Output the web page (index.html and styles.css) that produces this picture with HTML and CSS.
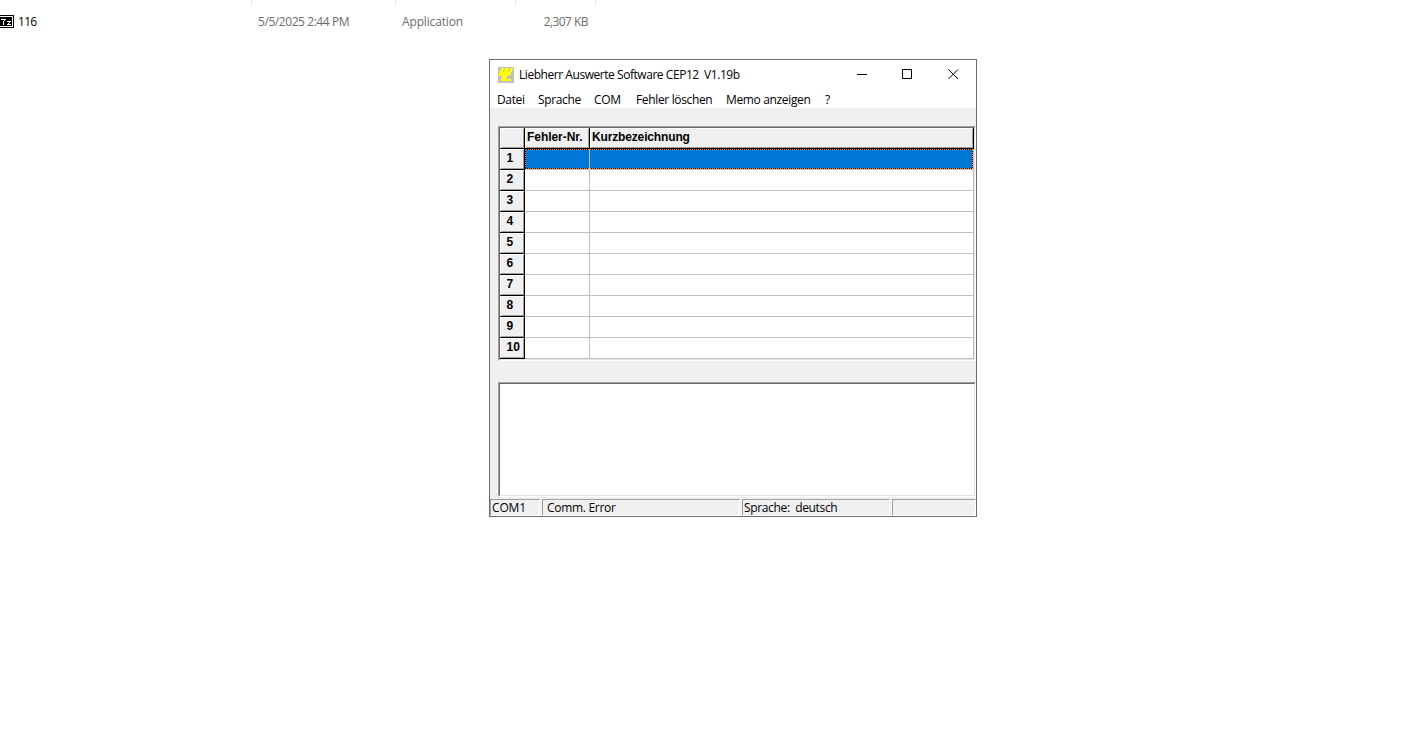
FILE: index.html
```
<!DOCTYPE html>
<html lang="de">
<head>
  <meta charset="UTF-8" />
  <title>Liebherr Auswerte Software CEP12</title>
  <link rel="stylesheet" href="styles.css">
</head>
<body>
  <div class="explorer">
    <div class="columns"><span></span><span></span><span></span><span></span></div>
    <div class="file">
      <div class="name">
        <svg class="icon" width="14" height="13" viewBox="0 0 14 13" shape-rendering="crispEdges">
          <path d="M0 0h14v13H0z" fill="#000"/>
          <path d="M0 1h13v11H0v-1h12V2H0z" fill="#fff"/>
          <path d="M1 4h5v1H5v1H4v4H3V6h1V5H1zM7 6h4v1h-1v1H9v1h2v1H7V9h1V8h1V7H7z" fill="#fff"/>
        </svg>
        <span>116</span>
      </div>
      <span class="date">5/5/2025 2:44 PM</span>
      <span class="type">Application</span>
      <span class="size">2,307 KB</span>
    </div>
  </div>

  <div class="window">
    <div class="titlebar">
      <svg class="logo" width="16" height="16" viewBox="0 0 16 16" shape-rendering="crispEdges">
        <path d="M0 0h16v16H0z" fill="#c0c0c0"/>
        <path d="M3 1h3v2H5v2h1V3h1V1h4v2h-1v2h1V3h1V1h3v2h-1v2h-1v3h-2v1H9v2H8v1h5v2H3v-3h1V9H1V6h1V3h1z" fill="#ff0"/>
      </svg>
      <span class="title">Liebherr Auswerte Software CEP12&nbsp; V1.19b</span>
      <svg class="controls" width="102" height="11" viewBox="0 0 102 11">
        <path d="M0 5.5h10M45.5.5h9v9h-9zM91.5.5l9.5 9.5M101 .5L91.5 10" fill="none" stroke="#000"/>
      </svg>
    </div>
    <div class="menu">
      <span class="m-datei">Datei</span>
      <span class="m-sprache">Sprache</span>
      <span class="m-com">COM</span>
      <span class="m-fehler">Fehler löschen</span>
      <span class="m-memo">Memo anzeigen</span>
      <span>?</span>
    </div>
    <div class="client">
      <div class="grid">
        <table>
          <tr><th class="num"></th><th class="nr"><span>Fehler-Nr.</span></th><th class="kurz"><span>Kurzbezeichnung</span></th></tr>
          <tr class="selected"><th>1</th><td></td><td></td></tr>
          <tr><th>2</th><td></td><td></td></tr>
          <tr><th>3</th><td></td><td></td></tr>
          <tr><th>4</th><td></td><td></td></tr>
          <tr><th>5</th><td></td><td></td></tr>
          <tr><th>6</th><td></td><td></td></tr>
          <tr><th>7</th><td></td><td></td></tr>
          <tr><th>8</th><td></td><td></td></tr>
          <tr><th>9</th><td></td><td></td></tr>
          <tr><th>10</th><td></td><td></td></tr>
        </table>
      </div>
      <div class="memo"></div>
    </div>
    <div class="status">
      <div class="com"><span>COM1</span></div>
      <div class="comm"><span>Comm. Error</span></div>
      <div class="lang"><span>Sprache:&nbsp; deutsch</span></div>
      <div class="rest"></div>
    </div>
  </div>
</body>
</html>
```
FILE: styles.css
```
* {
  box-sizing: border-box;
}
body {
  margin: 0;
  height: 754px;
  overflow: hidden;
  background: #fff;
  color: #000;
  font: 12px/16px "Open Sans", "Noto Sans", sans-serif;
  letter-spacing: -0.35px;
  white-space: nowrap;
}
svg {
  display: block;
}
.explorer {
  height: 59px;
}
.columns {
  display: grid;
  grid-template-columns: 252px 144px 120px 80px;
  height: 5px;
}
.columns span {
  border-right: 1px solid #e5e5e5;
}
.file {
  display: grid;
  grid-template-columns: 258px 144px 100px 84px;
  margin-top: 9px;
  color: #6d6d6d;
}
.name {
  display: flex;
  align-items: center;
  gap: 4px;
  color: #000;
  letter-spacing: -0.7px;
}
.icon {
  margin-bottom: 1px;
}
.date {
  letter-spacing: -0.43px;
}
.type {
  letter-spacing: -0.15px;
}
.size {
  width: 86px;
  text-align: right;
  letter-spacing: -0.55px;
}

.window {
  width: 488px;
  height: 458px;
  margin-left: 489px;
  border: 1px solid #6d6d6d;
  background: #fff;
}
.titlebar {
  display: flex;
  align-items: center;
  height: 30px;
  padding: 0 17px 1px 8px;
}
.title {
  margin-left: 5px;
  padding-top: 1px;
  letter-spacing: -0.45px;
}
.controls {
  margin-left: auto;
}
.menu {
  display: flex;
  gap: 14px;
  height: 18px;
  padding: 2px 7px 0;
}
.m-datei {
  width: 27px;
}
.m-sprache {
  width: 42px;
}
.m-com {
  width: 28px;
}
.m-fehler {
  width: 76px;
}
.m-memo {
  width: 85px;
}
.client {
  height: 389px;
  padding: 18px 0 0 8px;
  background: #f0f0f0;
}

/* sunken 3D frames */
.grid, .memo {
  position: relative;
  width: 478px;
  border: 1px solid;
  border-color: #a0a0a0 #fff #fff #a0a0a0;
  background: #fff;
}
.grid {
  height: 235px;
}
.memo {
  height: 115px;
  margin-top: 21px;
}
.grid::before, .memo::before {
  content: "";
  position: absolute;
  inset: 0;
  border: 1px solid;
  border-color: #696969 #e3e3e3 #e3e3e3 #696969;
}
table {
  width: 474px;
  margin: 1px 0 0 1px;
  border-spacing: 0;
  table-layout: fixed;
  font: bold 12px/15px "Liberation Sans", Arial, sans-serif;
  letter-spacing: -0.15px;
}
tr {
  height: 21px;
}
th, td {
  height: 21px;
  padding: 0;
  border-right: 1px solid #c0c0c0;
  border-bottom: 1px solid #c0c0c0;
}
th {
  padding: 0 0 2px 2px;
  border-color: #000;
  background: #f0f0f0;
  box-shadow: inset 1px 1px #fff, inset -1px -1px #a0a0a0;
  text-align: left;
}
tr th:first-child {
  padding-left: 6.5px;
  letter-spacing: 0.2px;
}
.num {
  width: 25px;
}
.nr {
  width: 65px;
  letter-spacing: -0.05px;
}
/* focus rectangle round the selected row */
.selected td {
  background:
    linear-gradient(90deg, #ff8728 50%, #000 50%) 0 0 / 2px 1px repeat-x,
    linear-gradient(90deg, #ff8728 50%, #000 50%) 0 100% / 2px 1px repeat-x,
    #0078d7;
  background-clip: padding-box;
}
.selected td:nth-child(2) {
  background:
    linear-gradient(90deg, #000 50%, #ff8728 50%) 0 0 / 2px 1px repeat-x,
    linear-gradient(90deg, #000 50%, #ff8728 50%) 0 100% / 2px 1px repeat-x,
    linear-gradient(#000 50%, #ff8728 50%) 0 0 / 1px 2px repeat-y,
    #0078d7;
}
.selected td:last-child {
  background:
    linear-gradient(90deg, #ff8728 50%, #000 50%) 0 0 / 2px 1px repeat-x,
    linear-gradient(90deg, #ff8728 50%, #000 50%) 0 100% / 2px 1px repeat-x,
    linear-gradient(#000 50%, #ff8728 50%) 100% 0 / 1px 2px repeat-y,
    #0078d7;
}

.status {
  display: grid;
  grid-template-columns: 50px 198px 148px 84px;
  gap: 2px;
  height: 19px;
  padding-top: 2px;
  background: #f0f0f0;
}
.status div {
  height: 17px;
  padding-left: 1px;
  border: 1px solid;
  border-color: #a0a0a0 #fff #fff #a0a0a0;
}
.status .com {
  letter-spacing: -0.15px;
}
.status .comm {
  padding-left: 4px;
  letter-spacing: -0.3px;
}
```
